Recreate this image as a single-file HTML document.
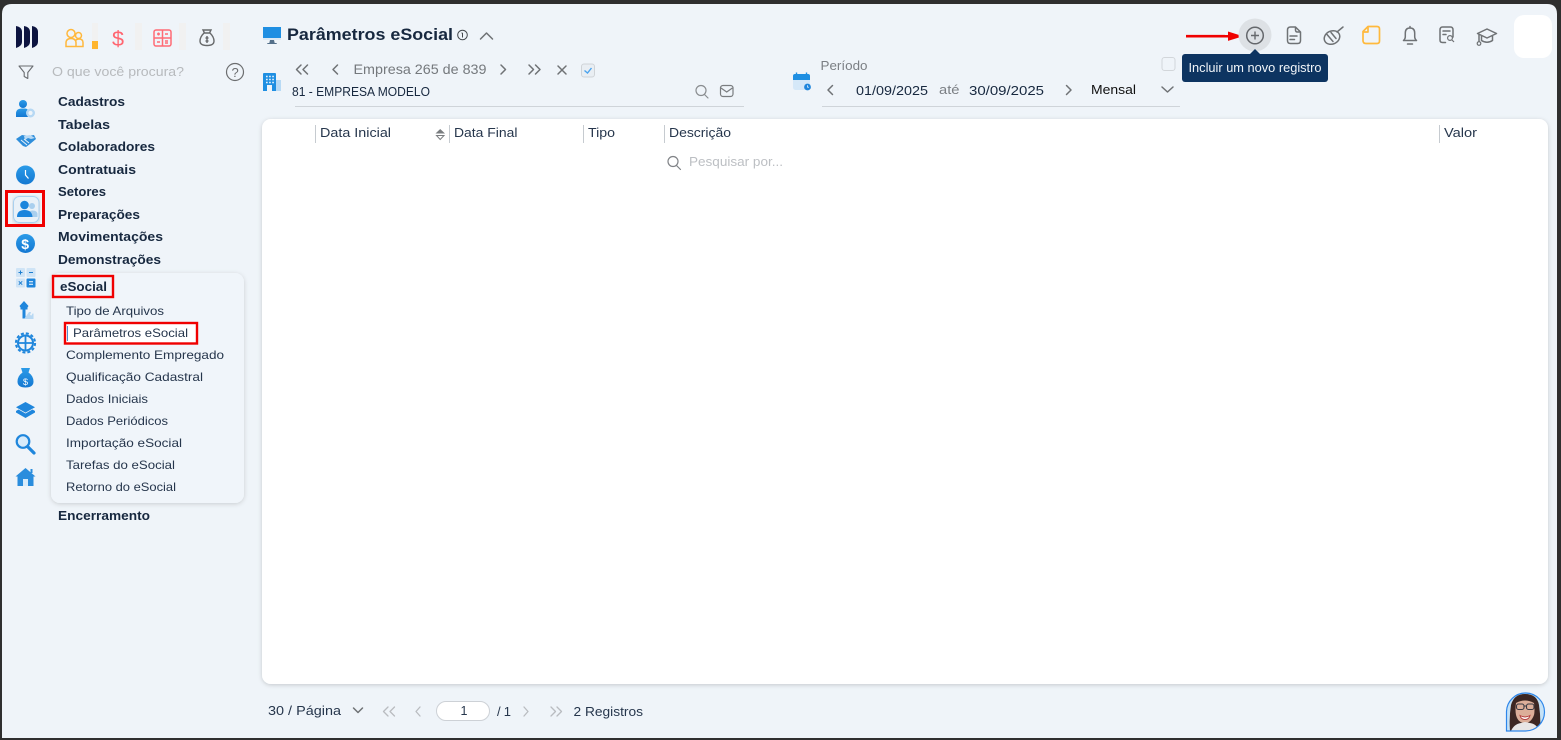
<!DOCTYPE html>
<html lang="pt-BR">
<head>
<meta charset="utf-8">
<title>Parâmetros eSocial</title>
<style>
html,body{margin:0;padding:0;width:1561px;height:740px;overflow:hidden;background:#2f2f2f}
svg{display:block;position:absolute;left:0;top:0}
text{font-family:"Liberation Sans",Arial,sans-serif;white-space:pre}
.m{font-size:13px;font-weight:700;fill:#17283f}
.s{font-size:12px;fill:#26364c}
.h{font-size:13px;fill:#26364c}
.g{fill:none;stroke:#6f7275;stroke-width:1.5;stroke-linecap:round;stroke-linejoin:round}
.l{fill:none;stroke:#b9bcc0;stroke-width:1.3;stroke-linecap:round;stroke-linejoin:round}
</style>
</head>
<body>
<svg width="1561" height="740" viewBox="0 0 1561 740" xmlns="http://www.w3.org/2000/svg">
<defs>
<linearGradient id="b" x1="0" y1="0" x2="0" y2="1"><stop offset="0" stop-color="#2b9be8"/><stop offset="1" stop-color="#1478d2"/></linearGradient>
<filter id="sh" x="-10%" y="-10%" width="120%" height="120%"><feDropShadow dx="0" dy="1" stdDeviation="2.5" flood-color="#000" flood-opacity=".16"/></filter>
<filter id="sh2" x="-5%" y="-5%" width="110%" height="110%"><feDropShadow dx="0" dy="1" stdDeviation="2" flood-color="#000" flood-opacity=".18"/></filter>
<clipPath id="av"><path d="M1506.500 731V711.500a19 19 0 1 1 19 19.500z"/></clipPath>
</defs>

<!-- window -->
<rect width="1561" height="740" fill="#2f2f2f"/>
<path d="M2 14Q2 4 12 4H1547Q1557 4 1557 14V738H2z" fill="#eff4f9"/>

<!-- logo -->
<path d="M16 26Q22 27 22 32V42Q22 46 16 48z" fill="#0d1440"/>
<path d="M24 26Q30 27 30 32V42Q30 46 24 48z" fill="#0d1440"/>
<path d="M32 26Q38 27 38 32V42Q38 46 32 48z" fill="#0d1440"/>

<!-- top tabs -->
<g fill="none" stroke="#ffb83d" stroke-width="1.500">
<circle cx="71" cy="33.500" r="4"/><circle cx="78.500" cy="35.500" r="3"/>
<path d="M66 46.500v-3.500q0-4.500 5-4.500t5 4.500v3.500zM76 46.500h7v-4q0-3.500-4-3.500-2 0-3.200 1.300"/>
</g>
<rect x="92" y="23" width="6" height="27" fill="#f1f1f1"/><rect x="92" y="41" width="6" height="8" fill="#ffb52e"/>
<text x="112" y="46" font-size="21" fill="#ff6570" textLength="12" lengthAdjust="spacingAndGlyphs">$</text>
<rect x="135" y="23" width="7" height="27" fill="#f1f1f1"/>
<g fill="none" stroke="#ff6b75" stroke-width="1.500"><rect x="154" y="30" width="17" height="16" rx="2"/><path d="M162.500 30v16M154 38h17"/><path d="M157 34h3M158.500 32.500v3M165 34h3M157 42h3M165 41h3M165 43h3"/></g>
<rect x="179" y="23" width="7" height="27" fill="#f1f1f1"/>
<g fill="none" stroke="#67696b" stroke-width="1.400"><path d="M203 30h8l-1.500 3h-5zM204 33q-4 4-4 8 0 4.500 7 4.500t7-4.500q0-4-4-8z"/><path d="M207 36v7M205.500 38h3M205.500 41h3"/></g>
<rect x="223" y="23" width="7" height="27" fill="#f1f1f1"/>

<!-- search row -->
<path d="M19 66h14l-5.200 6.500v6l-3.600-2v-4z" fill="none" stroke="#696c70" stroke-width="1.100" stroke-linejoin="round"/>
<text x="52" y="76" font-size="13" fill="#b7babd" textLength="132" lengthAdjust="spacingAndGlyphs">O que você procura?</text>
<circle cx="235" cy="72" r="8.500" fill="none" stroke="#6c6e70" stroke-width="1.200"/>
<text x="231.500" y="77" font-size="13" fill="#6c6e70">?</text>

<!-- left rail icons -->
<g fill="url(#b)">
<circle cx="23" cy="104" r="4"/><path d="M16 117v-3.500q0-5 6-5h3q2 0 3 1.500-1.500 3 0 7z"/>
</g>
<circle cx="30.500" cy="113" r="3.300" fill="none" stroke="#b6d8f4" stroke-width="2.400"/>

<g><path d="M16 139l6-4 6 1 6-1 2 4-6 5-4 3-3-1z" fill="#2e8edb"/><path d="M24 136l6-1 5 3-4 1-3-1-3 2z" fill="#b8d9f4"/><path d="M21 140l6 5M24 139l5 4" stroke="#e8f2fb" stroke-width="1" fill="none"/></g>

<circle cx="25.500" cy="175" r="9.500" fill="url(#b)"/><path d="M25.500 170v5l3 3.500" fill="none" stroke="#fff" stroke-width="1.200"/>

<rect x="13.500" y="196.500" width="25.500" height="26" rx="6" fill="#e9f1f8" stroke="#a9d0ef" stroke-width="1" filter="url(#sh2)"/>
<circle cx="32" cy="206" r="3" fill="#a9cfee"/><path d="M28 217h9.500v-2.500q0-4-5-4-2 0-3 .8z" fill="#a9cfee"/>
<circle cx="24.500" cy="205" r="4.300" fill="#1c85dc"/><path d="M17 217q0-7 7.500-7t8 7z" fill="#1c85dc"/>
<rect x="6.500" y="191.500" width="37" height="34" fill="none" stroke="#f00000" stroke-width="3"/>

<circle cx="25.500" cy="243.500" r="9.500" fill="url(#b)"/>
<text x="21.200" y="249" font-size="14" font-weight="700" fill="#fff">$</text>

<g>
<rect x="16" y="268" width="9" height="9" rx="1" fill="#cfe4f6"/><rect x="26.500" y="268" width="9" height="9" rx="1" fill="#cfe4f6"/>
<rect x="16" y="278.500" width="9" height="9" rx="1" fill="#cfe4f6"/><rect x="26.500" y="278.500" width="9" height="9" rx="1" fill="#1f86dc"/>
<path d="M18.500 272.500h4M20.500 270.500v4M29 272.500h4M18.800 281.300l3.400 3.400M22.200 281.300l-3.400 3.400" stroke="#1f7fd0" stroke-width="1" fill="none"/>
<path d="M29 281.800h4M29 284.200h4" stroke="#fff" stroke-width="1" fill="none"/>
</g>

<g><path d="M24 301l4.500 5-1 1.500v2h-2v9h-3v-9h-2v-2l-1-1.500z" fill="#1f86dc"/><path d="M24 319l5-7h2l-1 3 1.500.5 1-2h1v5.500z" fill="#b7d8f3"/></g>

<g fill="none"><circle cx="25.500" cy="343" r="7.500" stroke="#1f86dc" stroke-width="2"/><path d="M25.500 335v16M17.500 343h16" stroke="#1f86dc" stroke-width="1.800"/><circle cx="25.500" cy="343" r="9.600" stroke="#1f86dc" stroke-width="2" stroke-dasharray="3 2.030"/></g>

<path d="M21 368h9l-1.500 4.500q5 3.500 5 9 0 6-8 6t-8-6q0-5.500 5-9z" fill="url(#b)"/><text x="23" y="385" font-size="9" fill="#fff">$</text>

<path d="M25.500 402l9.500 5.300-9.500 5.300-9.500-5.300z" fill="#1f86dc"/>
<path d="M16 411l2.500-1.500 7 4 7-4 2.500 1.500v1.500l-9.500 5.500-9.500-5.500z" fill="#1f86dc"/>

<circle cx="23" cy="441.500" r="6.300" fill="#d8ebfa" stroke="#1f86dc" stroke-width="2.200"/>
<path d="M28 447l6 6" stroke="#1f86dc" stroke-width="3.200" stroke-linecap="round"/>

<path d="M25.500 468l10 8.500h-2v9.500h-16v-9.500h-2z" fill="#2a8ddd"/><rect x="23" y="479" width="5" height="7" fill="#d8ebfa"/><rect x="30.500" y="469" width="2" height="4" fill="#2a8ddd"/>

<!-- menu -->
<text class="m" x="58" y="106" textLength="67" lengthAdjust="spacingAndGlyphs">Cadastros</text>
<text class="m" x="58" y="129" textLength="52" lengthAdjust="spacingAndGlyphs">Tabelas</text>
<text class="m" x="58" y="151" textLength="97" lengthAdjust="spacingAndGlyphs">Colaboradores</text>
<text class="m" x="58" y="174" textLength="78" lengthAdjust="spacingAndGlyphs">Contratuais</text>
<text class="m" x="58" y="196" textLength="48" lengthAdjust="spacingAndGlyphs">Setores</text>
<text class="m" x="58" y="219" textLength="82" lengthAdjust="spacingAndGlyphs">Preparações</text>
<text class="m" x="58" y="241" textLength="105" lengthAdjust="spacingAndGlyphs">Movimentações</text>
<text class="m" x="58" y="264" textLength="103" lengthAdjust="spacingAndGlyphs">Demonstrações</text>

<rect x="51" y="273" width="193" height="230" rx="9" fill="#f0f5fa" filter="url(#sh)"/>
<rect x="53" y="276" width="60" height="21" fill="#f0f5fa" stroke="#f00000" stroke-width="2.400"/>
<text class="m" x="60" y="291" textLength="47" lengthAdjust="spacingAndGlyphs">eSocial</text>
<text class="s" x="66" y="315" textLength="98" lengthAdjust="spacingAndGlyphs">Tipo de Arquivos</text>
<rect x="65" y="323" width="132" height="20.500" fill="#fff" stroke="#f00000" stroke-width="2.400"/>
<rect x="67" y="326" width="1" height="15" fill="#4f8fd0"/>
<text class="s" x="73" y="337" textLength="115" lengthAdjust="spacingAndGlyphs">Parâmetros eSocial</text>
<text class="s" x="66" y="359" textLength="158" lengthAdjust="spacingAndGlyphs">Complemento Empregado</text>
<text class="s" x="66" y="381" textLength="137" lengthAdjust="spacingAndGlyphs">Qualificação Cadastral</text>
<text class="s" x="66" y="403" textLength="82" lengthAdjust="spacingAndGlyphs">Dados Iniciais</text>
<text class="s" x="66" y="425" textLength="102" lengthAdjust="spacingAndGlyphs">Dados Periódicos</text>
<text class="s" x="66" y="447" textLength="116" lengthAdjust="spacingAndGlyphs">Importação eSocial</text>
<text class="s" x="66" y="469" textLength="109" lengthAdjust="spacingAndGlyphs">Tarefas do eSocial</text>
<text class="s" x="66" y="491" textLength="110" lengthAdjust="spacingAndGlyphs">Retorno do eSocial</text>
<text class="m" x="58" y="520" textLength="92" lengthAdjust="spacingAndGlyphs">Encerramento</text>

<!-- title -->
<rect x="263" y="27" width="18" height="12.500" fill="#1f8fe2"/><rect x="263" y="38" width="18" height="2" fill="#dbe9f4"/><path d="M270 40h4l.7 3h2v1h-9.400v-1h2z" fill="#54708a"/>
<text x="287" y="40" font-size="17" font-weight="700" fill="#17283f" textLength="166" lengthAdjust="spacingAndGlyphs">Parâmetros eSocial</text>
<circle cx="462.500" cy="35" r="4.800" fill="none" stroke="#44484c" stroke-width="1"/><path d="M462.500 33v4.500M461.500 33h1" stroke="#44484c" stroke-width="1" fill="none"/>
<path class="g" d="M480.500 39l6-6 6 6"/>

<!-- empresa -->
<path d="M263 74q0-1 1-1h11q1 0 1 1v17h-13z" fill="#1f8fe2"/><rect x="267" y="85" width="5" height="6" fill="#eff4f9"/>
<rect x="276" y="80" width="5" height="11" fill="#b8daf5"/>
<path d="M266 76.500h8M266 79.500h8M266 82.500h8" stroke="#e3f0fb" stroke-width="1.600" stroke-dasharray="1.700 1.400" fill="none"/>

<path class="g" d="M301 65l-4.500 4.500 4.500 4.500M307.500 65l-4.500 4.500 4.500 4.500"/>
<path class="g" d="M337.500 65l-4.500 4.500 4.500 4.500"/>
<text x="353.500" y="74" font-size="13.500" fill="#75797d" textLength="133" lengthAdjust="spacingAndGlyphs">Empresa 265 de 839</text>
<path class="g" d="M501 65l4.500 4.500-4.500 4.500"/>
<path class="g" d="M529 65l4.500 4.500-4.500 4.500M535.500 65l4.500 4.500-4.500 4.500"/>
<path class="g" d="M558 66l8 8M566 66l-8 8"/>
<rect x="581.500" y="64" width="13" height="13" rx="2.500" fill="#e9eef3" stroke="#cfd3d7"/><path d="M584.500 70.500l3 2.500 4-5" fill="none" stroke="#4aa3ee" stroke-width="1.400"/>

<text x="292" y="96" font-size="13" fill="#17283f" textLength="138" lengthAdjust="spacingAndGlyphs">81 - EMPRESA MODELO</text>
<circle cx="701" cy="90.500" r="5" fill="none" stroke="#8a8d90" stroke-width="1.200"/><path d="M704.500 94.500l3.500 3.500" stroke="#8a8d90" stroke-width="1.200" stroke-linecap="round"/>
<rect x="720.500" y="85.500" width="12.500" height="11" rx="2.500" fill="none" stroke="#7a7d80" stroke-width="1.200"/><path d="M721 88l5.700 4 5.700-4" fill="none" stroke="#7a7d80" stroke-width="1.200"/>
<rect x="295" y="106" width="449" height="1" fill="#cfd4d9"/>

<!-- periodo -->
<rect x="793" y="74" width="17" height="16" rx="2.500" fill="#d5e8f8"/><path d="M793 80v-4q0-2 2-2h13q2 0 2 2v4z" fill="#1f8fe2"/><path d="M796.500 72.500v3M806.500 72.500v3" stroke="#1f8fe2" stroke-width="1.400"/>
<circle cx="807.500" cy="87" r="3.400" fill="#1f86dc"/><path d="M807.500 85.200v2h1.500" stroke="#fff" stroke-width=".7" fill="none"/>
<text x="820.500" y="70" font-size="13" fill="#7b7f84" textLength="47" lengthAdjust="spacingAndGlyphs">Período</text>
<path class="g" d="M832.500 85.500l-4.500 4.500 4.500 4.500"/>
<text x="856" y="95" font-size="13" fill="#17283f" textLength="72" lengthAdjust="spacingAndGlyphs">01/09/2025</text>
<text x="939" y="94" font-size="13" fill="#7b7f84" textLength="20.500" lengthAdjust="spacingAndGlyphs">até</text>
<text x="969" y="95" font-size="13" fill="#17283f" textLength="75" lengthAdjust="spacingAndGlyphs">30/09/2025</text>
<path class="g" d="M1066.500 85.500l4.500 4.500-4.500 4.500"/>
<text x="1091" y="94" font-size="13" fill="#111" textLength="45" lengthAdjust="spacingAndGlyphs">Mensal</text>
<path class="g" d="M1162 87l5.500 5 5.500-5"/>
<rect x="1162" y="57.500" width="13" height="13" rx="2.500" fill="#eff4f9" stroke="#d2d6da"/>
<rect x="822" y="106" width="358" height="1" fill="#cfd4d9"/>

<!-- toolbar -->
<path d="M1186 36.200h39" stroke="#f00000" stroke-width="2.600"/><path d="M1228 31.500l15 4.700-15 4.700z" fill="#f00000"/>
<rect x="1214" y="35" width="15" height="2.500" fill="#f00000"/>
<circle cx="1255" cy="35" r="16.500" fill="#dde1e5"/>
<circle cx="1255" cy="35.500" r="8.300" fill="none" stroke="#65686c" stroke-width="1.500"/>
<path d="M1251 35.500h8M1255 31.500v8" stroke="#65686c" stroke-width="1.400"/>
<path class="g" d="M1290.500 27h5l5 5v8.500q0 3-3 3h-7q-3 0-3-3V30q0-3 3-3zM1295.500 27v3q0 2 2 2h3M1290 36h7M1290 39.500h4.500"/>
<g class="g"><ellipse cx="1332" cy="37.500" rx="8" ry="6.500" transform="rotate(-25 1332 37.500)"/><path d="M1337 32l6-5M1327 34.500l6 7M1331 32.500l5 6"/></g>
<path d="M1368 26.500h9q2.500 0 2.500 2.500v12q0 2.500-2.500 2.500h-11q-3 0-3-3v-9zM1368 26.500v5.500h-5" fill="none" stroke="#ffb93d" stroke-width="1.700" stroke-linejoin="round"/>
<path class="g" d="M1410 26.500v1.500M1403.500 40.500q1.800-1.500 1.800-4v-3.500q0-5 4.700-5t4.700 5v3.500q0 2.500 1.800 4zM1407.500 44h5"/>
<path class="g" d="M1453 37v-7q0-3-2.500-3h-8q-2.500 0-2.500 3v10q0 2.500 2.500 2.500h3M1443 31h7M1443 34.500h3"/>
<circle cx="1450" cy="38" r="2.400" fill="none" stroke="#6f7275" stroke-width="1.200"/><path d="M1452 40l2 2" stroke="#6f7275" stroke-width="1.200"/>
<path class="g" d="M1487 29l9.500 4.500-9.500 4.500-9.500-4.500zM1481.500 36v4.500q5.500 3.500 11 0V36M1479 34.500v7"/>
<circle cx="1479" cy="43.500" r="1.800" fill="none" stroke="#6f7275" stroke-width="1.200"/>
<rect x="1514" y="15" width="38" height="43" rx="10" fill="#fff"/>

<!-- table card -->
<rect x="262" y="119" width="1286" height="565" rx="9" fill="#fff" filter="url(#sh2)"/>
<g fill="#c6cbd0"><rect x="315" y="125" width="1" height="18"/><rect x="449" y="125" width="1" height="18"/><rect x="583" y="125" width="1" height="18"/><rect x="664" y="125" width="1" height="18"/><rect x="1439" y="125" width="1" height="18"/></g>
<text class="h" x="320" y="137" textLength="71" lengthAdjust="spacingAndGlyphs">Data Inicial</text>
<path d="M435.500 133.500l4.700-4.500 4.800 4.500z" fill="#7a7d80"/><path d="M436.500 135.500h7.500l-3.800 4z" fill="none" stroke="#7a7d80"/>
<text class="h" x="454" y="137" textLength="63.500" lengthAdjust="spacingAndGlyphs">Data Final</text>
<text class="h" x="588" y="137" textLength="27" lengthAdjust="spacingAndGlyphs">Tipo</text>
<text class="h" x="669" y="137" textLength="62" lengthAdjust="spacingAndGlyphs">Descrição</text>
<text class="h" x="1444" y="137" textLength="33" lengthAdjust="spacingAndGlyphs">Valor</text>
<circle cx="673" cy="161.500" r="5" fill="none" stroke="#808387" stroke-width="1.200"/><path d="M676.500 165.500l4 4" stroke="#808387" stroke-width="1.200" stroke-linecap="round"/>
<text x="689" y="166" font-size="13" fill="#bcbfc3" textLength="94" lengthAdjust="spacingAndGlyphs">Pesquisar por...</text>

<!-- tooltip -->
<path d="M1250 54l5-5 5 5z" fill="#0d3461"/>
<rect x="1182" y="54" width="146" height="28" rx="3" fill="#0d3461"/>
<text x="1188.500" y="72" font-size="12.500" fill="#f1f5f9" textLength="133" lengthAdjust="spacingAndGlyphs">Incluir um novo registro</text>

<!-- pagination -->
<text x="268" y="715" font-size="13" fill="#26364c" textLength="73" lengthAdjust="spacingAndGlyphs">30 / Página</text>
<path class="g" d="M353.500 708l4.500 4.500 4.500-4.500"/>
<path class="l" d="M388 707l-4.500 4.500 4.500 4.500M394.500 707l-4.500 4.500 4.500 4.500M420 707l-4 4.500 4 4.500"/>
<rect x="436.500" y="701.500" width="53" height="19" rx="9.500" fill="#fff" stroke="#cdd1d6"/>
<text x="460.500" y="715" font-size="12.500" fill="#26364c">1</text>
<text x="497" y="716" font-size="13" fill="#26364c" textLength="14" lengthAdjust="spacing">/ 1</text>
<path class="l" d="M524 707l4 4.500-4 4.500M551 707l4.500 4.500-4.500 4.500M557 707l4.500 4.500-4.500 4.500"/>
<text x="573.500" y="716" font-size="13" fill="#26364c" textLength="69.500" lengthAdjust="spacingAndGlyphs">2 Registros</text>

<!-- avatar -->
<g clip-path="url(#av)">
<rect x="1505" y="691" width="41" height="41" fill="#c5e2f7"/>
<path d="M1510 731q-1-14 1-26 3-11 14-11 12 0 14 11 2 13 1 26z" fill="#3d2723"/>
<path d="M1516 703q9-5 18 0 1 8 0 12-3 8-9 8-7 0-9-8-1-5 0-12z" fill="#dcae99"/>
<path d="M1511 731q3-7 10-8l4-1 5 1q7 1 9 8z" fill="#e8e6e6"/>
<path d="M1520 715.500q5 3 10 0-1 4-5 4t-5-4z" fill="#fff" stroke="#b5403f" stroke-width=".9"/>
<rect x="1516.500" y="704" width="7.500" height="5.500" rx="2" fill="none" stroke="#3a3a44" stroke-width="1.100"/><rect x="1526.500" y="704" width="7.500" height="5.500" rx="2" fill="none" stroke="#3a3a44" stroke-width="1.100"/><path d="M1524 706h2.500" stroke="#3a3a44"/>
</g>
<path d="M1506.500 731V711.500a19 19 0 1 1 19 19.500z" fill="none" stroke="#2d86ea" stroke-width="1.200"/>
</svg>
</body>
</html>
